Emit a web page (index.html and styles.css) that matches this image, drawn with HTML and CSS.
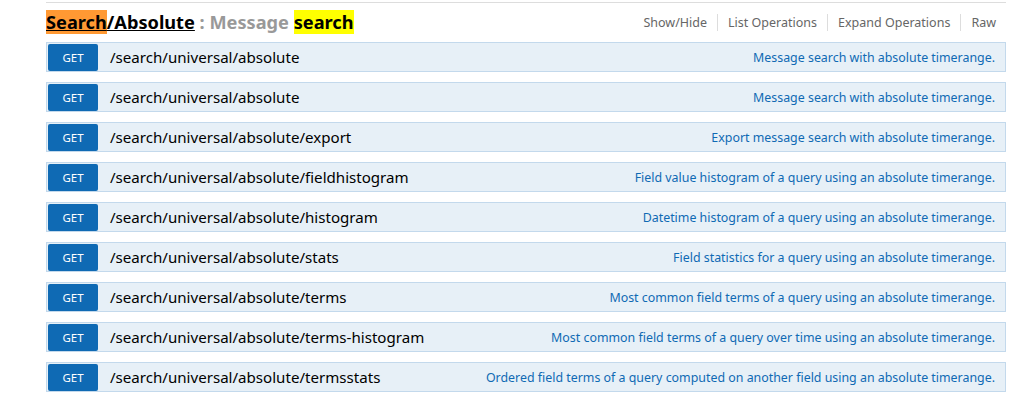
FILE: index.html
```html
<!DOCTYPE html>
<html>
<head>
<meta charset="utf-8">
<link rel="stylesheet" href="styles.css">
</head>
<body>
<div class="wrap">
  <div class="resource-head">
    <h2 class="title"><a class="res-link"><span class="hl-orange">Search</span>/Absolute</a> : Message <span class="hl-yellow">search</span></h2>
    <ul class="options">
      <li>Show/Hide</li>
      <li>List Operations</li>
      <li>Expand Operations</li>
      <li class="last">Raw</li>
    </ul>
  </div>
  <ul class="ops">
    <li class="op"><span class="method">GET</span><span class="path">/search/universal/absolute</span><span class="summary">Message search with absolute timerange.</span></li>
    <li class="op"><span class="method">GET</span><span class="path">/search/universal/absolute</span><span class="summary">Message search with absolute timerange.</span></li>
    <li class="op"><span class="method">GET</span><span class="path">/search/universal/absolute/export</span><span class="summary">Export message search with absolute timerange.</span></li>
    <li class="op"><span class="method">GET</span><span class="path">/search/universal/absolute/fieldhistogram</span><span class="summary">Field value histogram of a query using an absolute timerange.</span></li>
    <li class="op"><span class="method">GET</span><span class="path">/search/universal/absolute/histogram</span><span class="summary">Datetime histogram of a query using an absolute timerange.</span></li>
    <li class="op"><span class="method">GET</span><span class="path">/search/universal/absolute/stats</span><span class="summary">Field statistics for a query using an absolute timerange.</span></li>
    <li class="op"><span class="method">GET</span><span class="path">/search/universal/absolute/terms</span><span class="summary">Most common field terms of a query using an absolute timerange.</span></li>
    <li class="op"><span class="method">GET</span><span class="path">/search/universal/absolute/terms-histogram</span><span class="summary">Most common field terms of a query over time using an absolute timerange.</span></li>
    <li class="op"><span class="method">GET</span><span class="path">/search/universal/absolute/termsstats</span><span class="summary">Ordered field terms of a query computed on another field using an absolute timerange.</span></li>
  </ul>
</div>
</body>
</html>
```
FILE: styles.css
```css
html, body {
  margin: 0;
  padding: 0;
  background: #fff;
}
body {
  font-family: "Noto Sans", "Open Sans", sans-serif;
}
.wrap {
  width: 960px;
  margin-left: 46px;
  border-top: 1px solid #ddd;
  margin-top: 2px;
}
.resource-head {
  display: flex;
  justify-content: space-between;
  align-items: center;
  height: 39px;
}
.title {
  margin: 0;
  font-size: 18.2px;
  font-weight: bold;
  color: #999;
  line-height: 21px;
}
.res-link {
  color: #000;
  text-decoration: underline;
}
.hl-orange {
  background: #ff9933;
  color: #000;
}
.hl-yellow {
  background: #ffff00;
  color: #000;
}
.options {
  list-style: none;
  margin: 0;
  padding: 0 10px 0 0;
  display: flex;
  font-size: 12.5px;
  color: #666;
}
.options li {
  padding: 0 10px;
  border-right: 1px solid #ddd;
  line-height: 17px;
}
.options li.last {
  border-right: none;
  padding-right: 0;
}
.ops {
  list-style: none;
  margin: 0;
  padding: 0;
}
.op {
  display: flex;
  align-items: center;
  background: #e7f0f7;
  border: 1px solid #c3d9ec;
  margin: 0 0 10px 0;
  height: 28px;
}
.method {
  width: 50px;
  height: 27px;
  margin-left: 1px;
  background: #0f6ab4;
  color: #fff;
  border-radius: 2px;
  font-size: 11.5px;
  display: flex;
  align-items: center;
  justify-content: center;
  padding-top: 1px;
  box-sizing: border-box;
}
.path {
  padding-left: 12px;
  font-size: 15.1px;
  color: #000;
}
.summary {
  margin-left: auto;
  padding-right: 10px;
  font-size: 12.4px;
  color: #0f6ab4;
}
```
